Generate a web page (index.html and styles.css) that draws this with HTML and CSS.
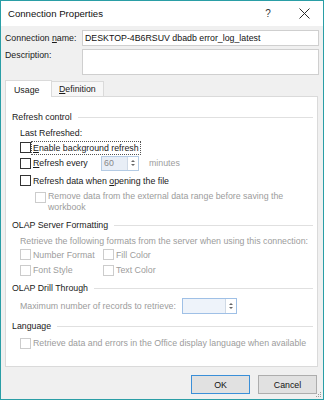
FILE: index.html
```html
<!DOCTYPE html>
<html lang="en">
<head>
    <meta charset="UTF-8">
    <title>Connection Properties</title>
    <link rel="stylesheet" href="styles.css">
</head>
<body>
    <div class="window">
        <!-- Title bar -->
        <div class="titlebar">
            <span class="title">Connection Properties</span>
            <span class="help">?</span>
            <span class="close">
                <svg width="11" height="11" viewBox="0 0 11 11"><path d="M0.5 0.5L10.5 10.5M10.5 0.5L0.5 10.5" stroke="#2b2b2b" stroke-width="1" fill="none"/></svg>
            </span>
        </div>

        <div class="content">
            <!-- Name and description -->
            <div class="fields">
                <label>Connection <u>n</u>ame:</label>
                <div class="textbox">DESKTOP-4B6RSUV dbadb error_log_latest</div>
                <label class="top">Description:</label>
                <div class="textbox area"></div>
            </div>

            <!-- Tabs -->
            <div class="tabs">
                <div class="tab active">Usage</div>
                <div class="tab"><u>D</u>efinition</div>
            </div>

            <div class="panel">
                <div class="group g-refresh">Refresh control</div>
                <div class="row indent h16">Last Refreshed:</div>
                <div class="row indent h13">
                    <span class="check"></span>
                    <span class="focus"><u>E</u>nable background refresh</span>
                </div>
                <div class="row indent h18">
                    <span class="check"></span>
                    <span class="every"><u>R</u>efresh every</span>
                    <span class="spin small">
                        <span class="spin-value">60</span>
                        <span class="spin-arrows"><i class="up"></i><i class="down"></i></span>
                    </span>
                    <span class="muted minutes">minutes</span>
                </div>
                <div class="row indent h17">
                    <span class="check"></span>
                    <span>Refresh data when <u>o</u>pening the file</span>
                </div>
                <div class="row nested">
                    <span class="check off"></span>
                    <span class="muted wrap">Remove data from the external data range before saving the workbook</span>
                </div>

                <div class="group g-olap">OLAP Server Formatting</div>
                <div class="row indent h15 muted">Retrieve the following formats from the server when using this connection:</div>
                <div class="row indent h13 muted">
                    <span class="cell"><span class="check off"></span>Number Format</span>
                    <span class="cell"><span class="check off"></span>Fill Color</span>
                </div>
                <div class="row indent h18 muted">
                    <span class="cell"><span class="check off"></span>Font Style</span>
                    <span class="cell"><span class="check off"></span>Text Color</span>
                </div>

                <div class="group g-drill">OLAP Drill Through</div>
                <div class="row indent h20 muted">
                    <span class="max">Maximum number of records to retrieve:</span>
                    <span class="spin wide">
                        <span class="spin-value"></span>
                        <span class="spin-arrows"><i class="up"></i><i class="down"></i></span>
                    </span>
                </div>

                <div class="group g-lang">Language</div>
                <div class="row indent h18 muted">
                    <span class="check off"></span>
                    <span>Retrieve data and errors in the Office display language when available</span>
                </div>
            </div>

            <div class="buttons">
                <button class="btn default">OK</button>
                <button class="btn">Cancel</button>
            </div>
        </div>

        <svg class="grip" width="6" height="6" viewBox="0 0 6 6">
            <rect x="4" y="0" width="1" height="1" fill="#9a9a9a"/>
            <rect x="2" y="2" width="1" height="1" fill="#9a9a9a"/>
            <rect x="4" y="2" width="1" height="1" fill="#9a9a9a"/>
            <rect x="0" y="4" width="1" height="1" fill="#9a9a9a"/>
            <rect x="2" y="4" width="1" height="1" fill="#9a9a9a"/>
            <rect x="4" y="4" width="1" height="1" fill="#9a9a9a"/>
        </svg>
    </div>
</body>
</html>
```

FILE: styles.css
```css
body {
    margin: 0;
    padding: 0;
    font-family: "Liberation Sans", Arial, sans-serif;
    font-size: 8.8px;
    color: #1a1a1a;
}

/* Window frame */
.window {
    position: relative;
    width: 324px;
    height: 400px;
    box-sizing: border-box;
    border: 1px solid #2a9ea6;
    background-color: #f0f0f0;
    display: flex;
    flex-direction: column;
}

.titlebar {
    height: 25px;
    background-color: #fff;
    display: flex;
    align-items: center;
    padding-left: 7px;
}

.title {
    font-size: 9.6px;
    color: #111;
}

.help {
    margin-left: auto;
    width: 20px;
    text-align: center;
    font-size: 10px;
    color: #333;
}

.close {
    width: 24px;
    margin-left: 14px;
    margin-right: 7px;
    display: flex;
    justify-content: center;
}

.content {
    flex: 1;
    display: flex;
    flex-direction: column;
    padding: 4px 4px 0 4px;
}

/* Name / description fields */
.fields {
    display: grid;
    grid-template-columns: 77px 1fr;
    row-gap: 3px;
    align-items: center;
}

.fields label.top {
    align-self: start;
    padding-top: 1px;
}

.textbox {
    height: 16px;
    box-sizing: border-box;
    border: 1px solid #cfcfcf;
    background-color: #fff;
    padding-left: 2px;
    line-height: 14px;
    color: #111;
}

.textbox.area {
    height: 26px;
}

/* Tabs */
.tabs {
    display: flex;
    align-items: flex-end;
    margin-top: 4px;
    height: 17px;
}

.tab {
    height: 14px;
    line-height: 14px;
    padding: 0 7px;
    border: 1px solid #dadada;
    border-bottom: none;
    background-color: #f7f7f7;
    margin-left: -1px;
}

.tab.active {
    height: 16px;
    line-height: 18px;
    width: 30px;
    padding: 0 7px 0 8px;
    background-color: #fff;
    margin-left: 0;
    position: relative;
    z-index: 1;
    margin-bottom: -1px;
}

.panel {
    height: 271px;
    box-sizing: border-box;
    margin-right: 1px;
    border: 1px solid #dadada;
    background-color: #fff;
    padding: 12px 4px 0 6px;
}

.group {
    display: flex;
    align-items: center;
    height: 16px;
}

.group::after {
    content: '';
    flex: 1;
    height: 1px;
    background-color: #e0e0e0;
    margin-left: 6px;
}

.g-olap { margin-top: 4px; }
.g-drill { margin-top: 1px; }
.g-lang { margin-top: 2px; }

.row {
    display: flex;
    align-items: center;
    white-space: nowrap;
}

.indent { margin-left: 8px; }
.h13 { height: 13px; }
.h15 { height: 15px; }
.h16 { height: 16px; }
.h17 { height: 17px; }
.h18 { height: 18px; }
.h20 { height: 20px; }

.muted { color: #9c9c9c; }

.check {
    width: 11px;
    height: 11px;
    box-sizing: border-box;
    border: 1px solid #333;
    background-color: #fff;
    margin-right: 2px;
    flex-shrink: 0;
}

.check.off {
    border-color: #cccccc;
}

.focus {
    outline: 1px dotted #555;
    outline-offset: 0;
    padding: 0 1px;
    margin-left: -1px;
    line-height: 12px;
}

.every {
    width: 68px;
}

/* Spinner boxes */
.spin {
    display: flex;
    box-sizing: border-box;
    border: 1px solid #b4cbe4;
    background-color: #fff;
}

.spin.small {
    width: 38px;
    height: 15px;
}

.spin.wide {
    width: 55px;
    height: 16px;
    border-color: #9fc0e6;
}

.spin-value {
    flex: 1;
    background-color: #e8eef6;
    color: #888;
    padding-left: 2px;
    line-height: 13px;
}

.spin.wide .spin-value {
    background-color: #eef3fa;
}

.spin-arrows {
    width: 10px;
    border-left: 1px solid #cfd9e5;
    display: flex;
    flex-direction: column;
    align-items: center;
    justify-content: center;
    gap: 2px;
}

.spin-arrows i {
    width: 0;
    height: 0;
    border-left: 2px solid transparent;
    border-right: 2px solid transparent;
}

.spin-arrows .up { border-bottom: 2px solid #666; }
.spin-arrows .down { border-top: 2px solid #666; }

.minutes {
    margin-left: 10px;
}

.nested {
    margin-left: 23px;
    margin-top: 2px;
    align-items: flex-start;
}

.nested .check {
    margin-top: 1px;
}

.wrap {
    white-space: normal;
    line-height: 11px;
    width: 250px;
}

.cell {
    display: flex;
    align-items: center;
    width: 83px;
}

.max {
    width: 162px;
}

/* Dialog buttons */
.buttons {
    display: flex;
    justify-content: flex-end;
    gap: 8px;
    margin-top: 8px;
    margin-right: 2px;
}

.btn {
    width: 59px;
    height: 19px;
    font-family: "Liberation Sans", Arial, sans-serif;
    font-size: 8.8px;
    color: #111;
    background-color: #e1e1e1;
    border: 1px solid #adadad;
    padding: 0;
}

.btn.default {
    border-color: #3a8fd8;
}

.grip {
    position: absolute;
    right: 1px;
    bottom: 1px;
}
```
